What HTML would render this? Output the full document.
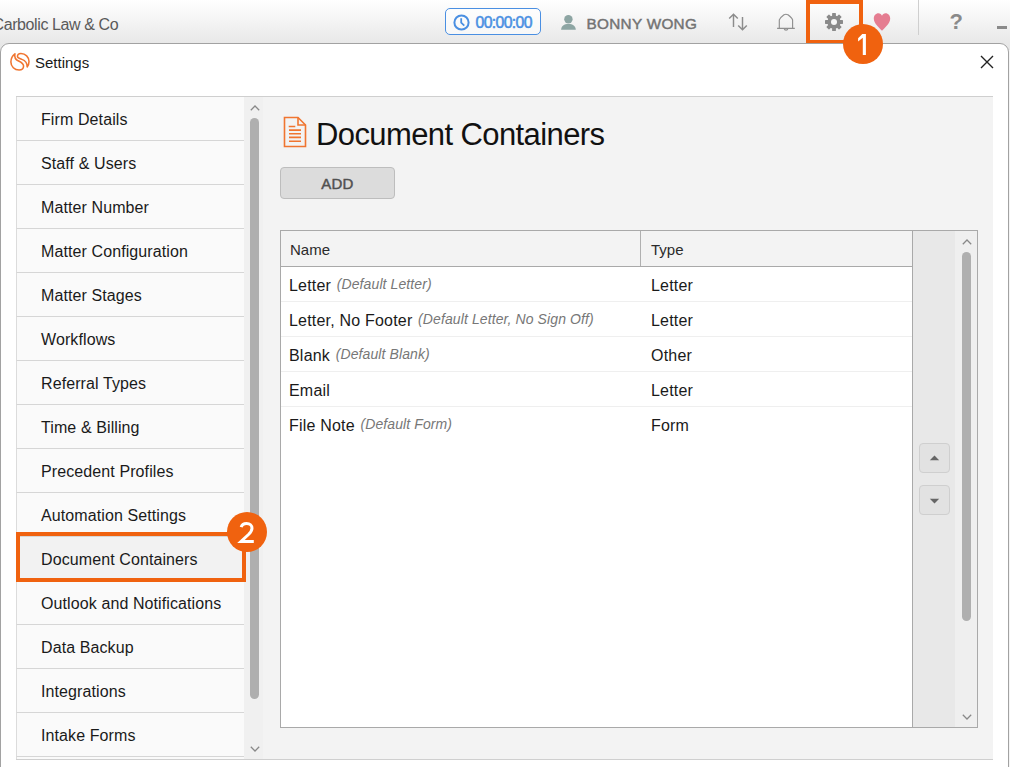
<!DOCTYPE html>
<html><head><meta charset="utf-8">
<style>
*{box-sizing:border-box;margin:0;padding:0}
html,body{width:1010px;height:767px;overflow:hidden;background:#f4f4f4;font-family:"Liberation Sans",sans-serif;color:#1a1a1a}
.abs{position:absolute}
#topbar{position:absolute;left:0;top:0;width:1010px;height:50px;background:linear-gradient(#ffffff 0%,#fbfbfb 16%,#e8e8e8 86%,#e6e6e6 100%)}
#firm{left:-7.5px;top:15.5px;font-size:16px;color:#5a5a5a;letter-spacing:-0.4px;white-space:nowrap}
#timer{left:445px;top:8px;width:96px;height:27px;border:1px solid #4a8fe2;border-radius:5px;background:rgba(255,255,255,0.6)}
#timer .t{position:absolute;left:29.5px;top:5px;font-size:15.8px;color:#4a8fe2;-webkit-text-stroke:0.5px #4a8fe2;letter-spacing:-0.65px}
#uname{left:586.5px;top:14.5px;font-size:15.3px;color:#737373;-webkit-text-stroke:0.45px #737373;letter-spacing:0.3px;white-space:nowrap}
#gearbox{left:806px;top:0px;width:57px;height:44px;border:4px solid #f0620f}
.badge{position:absolute;width:40px;height:40px;border-radius:50%;background:#f0620f;color:#fff;font-size:28px;text-align:center;line-height:40px}
#dialog{position:absolute;left:0;top:43px;width:1009px;height:740px;background:#fff;border:1px solid #a2a2a2;border-radius:9px 9px 0 0}
#title{left:35px;top:54px;font-size:15px;color:#1a1a1a}
#content{left:16px;top:96px;width:977px;height:664px;background:#f3f3f3;border-top:1px solid #cfcfcf;border-bottom:1px solid #cfcfcf}
#nav{left:16px;top:97px;width:228px;height:662px;overflow:hidden}
.item{position:relative;height:44px;background:#fafafa;border-bottom:1px solid #d6d6d6;border-left:1px solid #dcdcdc;font-size:16px;color:#1a1a1a;padding-left:24px;padding-top:14px;letter-spacing:0.1px;white-space:nowrap}
.item.sel{background:#f2f2f2}
#navsb{left:244px;top:97px;width:19px;height:662px;background:#f0f0f0}
.thumb{position:absolute;background:#afafaf;border-radius:5px}
.chev{position:absolute}
#doctitle{left:316px;top:116.5px;font-size:31px;color:#111;letter-spacing:-0.6px;white-space:nowrap}
#add{left:280px;top:167px;width:115px;height:32px;background:#dcdcdc;border:1px solid #bdbdbd;border-radius:4px;font-size:15px;color:#505050;-webkit-text-stroke:0.45px #505050;text-align:center;line-height:31px;letter-spacing:0.2px}
#table{left:280px;top:230px;width:698px;height:498px;border:1px solid #a9a9a9;background:#fff}
#thead{position:absolute;left:0;top:0;width:631px;height:36px;background:#f3f3f3;border-bottom:1px solid #a9a9a9}
.th{position:absolute;top:9.5px;font-size:15px;color:#2b2b2b}
.row{position:absolute;left:0;width:631px;height:35px;border-bottom:1px solid #efefef}
.row .n{position:absolute;left:8px;top:10px;font-size:16px;color:#1a1a1a;white-space:nowrap;letter-spacing:0.2px}
.row .n i{font-size:14px;color:#777;position:relative;top:-2px;margin-left:1px;letter-spacing:0.1px}
.row .ty{position:absolute;left:370px;top:10px;font-size:16px;color:#1a1a1a;letter-spacing:0.2px}
#side{position:absolute;left:631px;top:0;width:65px;height:496px;background:#e8e8e8;border-left:1px solid #a9a9a9}
#tsb{position:absolute;left:42px;top:0;width:22px;height:496px;background:#efefef}
.btn{position:absolute;left:6px;width:31px;height:30px;background:#e2e2e2;border:1px solid #cfcfcf;border-radius:4px}
</style></head><body>

<div id="topbar">
  <div id="firm" class="abs">Carbolic Law &amp; Co</div>
  <div id="timer" class="abs">
    <svg class="abs" style="left:7px;top:5px" width="17" height="17" viewBox="0 0 17 17"><circle cx="8.5" cy="8.5" r="7.1" fill="none" stroke="#4a8fe2" stroke-width="2"/><path d="M8.2 4.3V8.7L11.3 11.6" fill="none" stroke="#4a8fe2" stroke-width="1.8"/></svg>
    <div class="t">00:00:00</div>
  </div>
  <svg class="abs" style="left:561px;top:14px" width="16" height="17" viewBox="0 0 16 17"><circle cx="7.4" cy="5.2" r="4.2" fill="#8da5a3"/><path d="M0.1 15.7C0.3 11.8 3 9.9 7.4 9.9S14.6 11.8 14.8 15.7Z" fill="#8da5a3"/></svg>
  <div id="uname" class="abs">BONNY WONG</div>
  <svg class="abs" style="left:728px;top:12px" width="21" height="20" viewBox="0 0 21 20"><path d="M5.5 15V2.3M1.2 6.6L5.5 2.3L9.8 6.6M14.5 5V17.7M10.2 13.4L14.5 17.7L18.8 13.4" fill="none" stroke="#8c8c8c" stroke-width="1.45"/></svg>
  <svg class="abs" style="left:776px;top:13px" width="20" height="19" viewBox="0 0 20 19"><path d="M1.1 15.4H18.8M3.3 15V6.8C4 4.6 6 3.2 8 1.7C8.8 1.3 11 1.3 11.8 1.7C13.8 3.2 16 4.8 16.6 7V15M8.3 15.9C8.5 17.6 11.5 17.6 11.8 15.9" fill="none" stroke="#8f8f8f" stroke-width="1.15"/></svg>
  <div id="gearbox" class="abs"></div>
  <svg class="abs" style="left:824px;top:12px" width="20" height="20" viewBox="0 0 20 20"><g fill="#8a8a8a"><circle cx="10" cy="10" r="6.6"/><rect x="8.1" y="1" width="3.8" height="18" rx="0.6"/><rect x="8.1" y="1" width="3.8" height="18" rx="0.6" transform="rotate(45 10 10)"/><rect x="8.1" y="1" width="3.8" height="18" rx="0.6" transform="rotate(90 10 10)"/><rect x="8.1" y="1" width="3.8" height="18" rx="0.6" transform="rotate(135 10 10)"/></g><circle cx="10" cy="10" r="3" fill="#f7f7f7"/></svg>
  <svg class="abs" style="left:872px;top:12px" width="20" height="19" viewBox="0 0 20 19"><path d="M10 18.7C7.6 15.8 1.8 11.6 1.8 6.4C1.8 3.5 3.8 1.2 6.4 1.2C8.1 1.2 9.4 2.3 10 3.7C10.6 2.3 11.9 1.2 13.6 1.2C16.2 1.2 18.2 3.5 18.2 6.4C18.2 11.6 12.4 15.8 10 18.7Z" fill="#e57d91"/></svg>
  <div class="abs" style="left:918px;top:0;width:1px;height:35px;background:#cfcfcf"></div>
  <div class="abs" style="left:949.5px;top:9px;font-size:22px;font-weight:bold;color:#8a8a8a">?</div>
  <div class="abs" style="left:997px;top:26px;width:10px;height:3px;background:#8a8a8a"></div>
</div>

<div id="dialog"></div>
<svg class="abs" style="left:5px;top:48px" width="30" height="28" viewBox="0 0 30 28"><g fill="none" stroke="#f07530" stroke-width="1.65" stroke-linejoin="round" transform="translate(15 14) scale(0.94) translate(-15 -14)"><path d="M9.6 5.3C7 7.3 5.3 10.3 5.3 14C5.3 18.8 9.2 22.6 14 22.6C16.8 22.6 18.8 20.8 18.8 18.3C18.8 15.6 16 14.2 13.5 13C10.5 11.6 8.8 9 9.6 5.3Z"/><path d="M22.6 19.2C24 17.5 24.6 15.5 24.6 13.5C24.6 8.7 20.8 5 16 5C13.8 5 12.3 6.3 12.3 8.2C12.3 9.8 14.5 10.3 17 11.2C20.5 12.5 22.8 15 22.6 19.2Z"/></g></svg>
<div id="title" class="abs">Settings</div>
<svg class="abs" style="left:980px;top:55px" width="14" height="14" viewBox="0 0 14 14"><path d="M1 1L13 13M13 1L1 13" stroke="#222" stroke-width="1.4"/></svg>

<div id="content" class="abs"></div>
<div id="nav" class="abs">
  <div class="item">Firm Details</div>
  <div class="item">Staff &amp; Users</div>
  <div class="item">Matter Number</div>
  <div class="item">Matter Configuration</div>
  <div class="item">Matter Stages</div>
  <div class="item">Workflows</div>
  <div class="item">Referral Types</div>
  <div class="item">Time &amp; Billing</div>
  <div class="item">Precedent Profiles</div>
  <div class="item">Automation Settings</div>
  <div class="item sel">Document Containers</div>
  <div class="item">Outlook and Notifications</div>
  <div class="item">Data Backup</div>
  <div class="item">Integrations</div>
  <div class="item">Intake Forms</div>
  <div class="item"></div>
</div>
<div id="navsb" class="abs">
  <svg class="chev" style="left:6px;top:8px" width="10" height="6" viewBox="0 0 10 6"><path d="M0.8 5.2L5 1L9.2 5.2" fill="none" stroke="#888" stroke-width="1.25"/></svg>
  <div class="thumb" style="left:6px;top:21px;width:9px;height:581px"></div>
  <svg class="chev" style="left:6px;top:649px" width="10" height="6" viewBox="0 0 10 6"><path d="M0.8 0.8L5 5L9.2 0.8" fill="none" stroke="#888" stroke-width="1.25"/></svg>
</div>
<div class="abs" style="left:16px;top:532px;width:230px;height:50px;border:4px solid #f0620f"></div>
<div class="badge" style="left:227px;top:512px"><svg class="abs" style="left:0;top:0" width="40" height="40" viewBox="0 0 40 40"><path d="M14.2 15.2C14.8 12.5 16.8 11.4 19.6 11.4C22.9 11.4 25 13.4 25 16.2C25 18.5 23.8 20.2 21.5 22.5L14 29.5H26.8" fill="none" stroke="#fff" stroke-width="3"/></svg></div>

<svg class="abs" style="left:283px;top:116px" width="24" height="32" viewBox="0 0 24 32"><g fill="none" stroke="#f07530" stroke-width="1.6"><path d="M1.5 1.5H15L22.5 9V30.5H1.5Z"/><path d="M15 1.5V9H22.5"/></g><g stroke="#f07530" stroke-width="1.6"><path d="M5.7 10.5H12.3M6 14.1H18M6 17.8H18M6 21.4H18M6 25.3H18"/></g></svg>
<div id="doctitle" class="abs">Document Containers</div>
<div id="add" class="abs">ADD</div>

<div id="table" class="abs">
  <div id="thead">
    <div class="th" style="left:9px">Name</div>
    <div class="abs" style="left:359px;top:0;width:1px;height:35px;background:#b0b0b0"></div>
    <div class="th" style="left:370px">Type</div>
  </div>
  <div class="row" style="top:36px"><div class="n">Letter <i>(Default Letter)</i></div><div class="ty">Letter</div></div>
  <div class="row" style="top:71px"><div class="n">Letter, No Footer <i>(Default Letter, No Sign Off)</i></div><div class="ty">Letter</div></div>
  <div class="row" style="top:106px"><div class="n">Blank <i>(Default Blank)</i></div><div class="ty">Other</div></div>
  <div class="row" style="top:141px"><div class="n">Email</div><div class="ty">Letter</div></div>
  <div class="row" style="top:176px;border-bottom:none"><div class="n">File Note <i>(Default Form)</i></div><div class="ty">Form</div></div>
  <div id="side">
    <div class="btn" style="top:212px"><svg class="abs" style="left:8.5px;top:10.5px" width="11" height="6" viewBox="0 0 11 6"><path d="M0.8 5.3L5.5 0.6L10.2 5.3Z" fill="#666"/></svg></div>
    <div class="btn" style="top:254px"><svg class="abs" style="left:8.5px;top:11.5px" width="11" height="6" viewBox="0 0 11 6"><path d="M0.8 0.7L5.5 5.4L10.2 0.7Z" fill="#666"/></svg></div>
    <div id="tsb">
      <svg class="chev" style="left:7px;top:8px" width="10" height="6" viewBox="0 0 10 6"><path d="M0.8 5.2L5 1L9.2 5.2" fill="none" stroke="#888" stroke-width="1.25"/></svg>
      <div class="thumb" style="left:7px;top:21px;width:9px;height:369px"></div>
      <svg class="chev" style="left:7px;top:483px" width="10" height="6" viewBox="0 0 10 6"><path d="M0.8 0.8L5 5L9.2 0.8" fill="none" stroke="#888" stroke-width="1.25"/></svg>
    </div>
  </div>
</div>

<div class="badge" style="left:843px;top:24px"><svg class="abs" style="left:0;top:0" width="40" height="40" viewBox="0 0 40 40"><path d="M19.3 9.9H22.9V31H19.8V13.8L15.1 17.6V14.3Z" fill="#fff"/></svg></div>
</body></html>
